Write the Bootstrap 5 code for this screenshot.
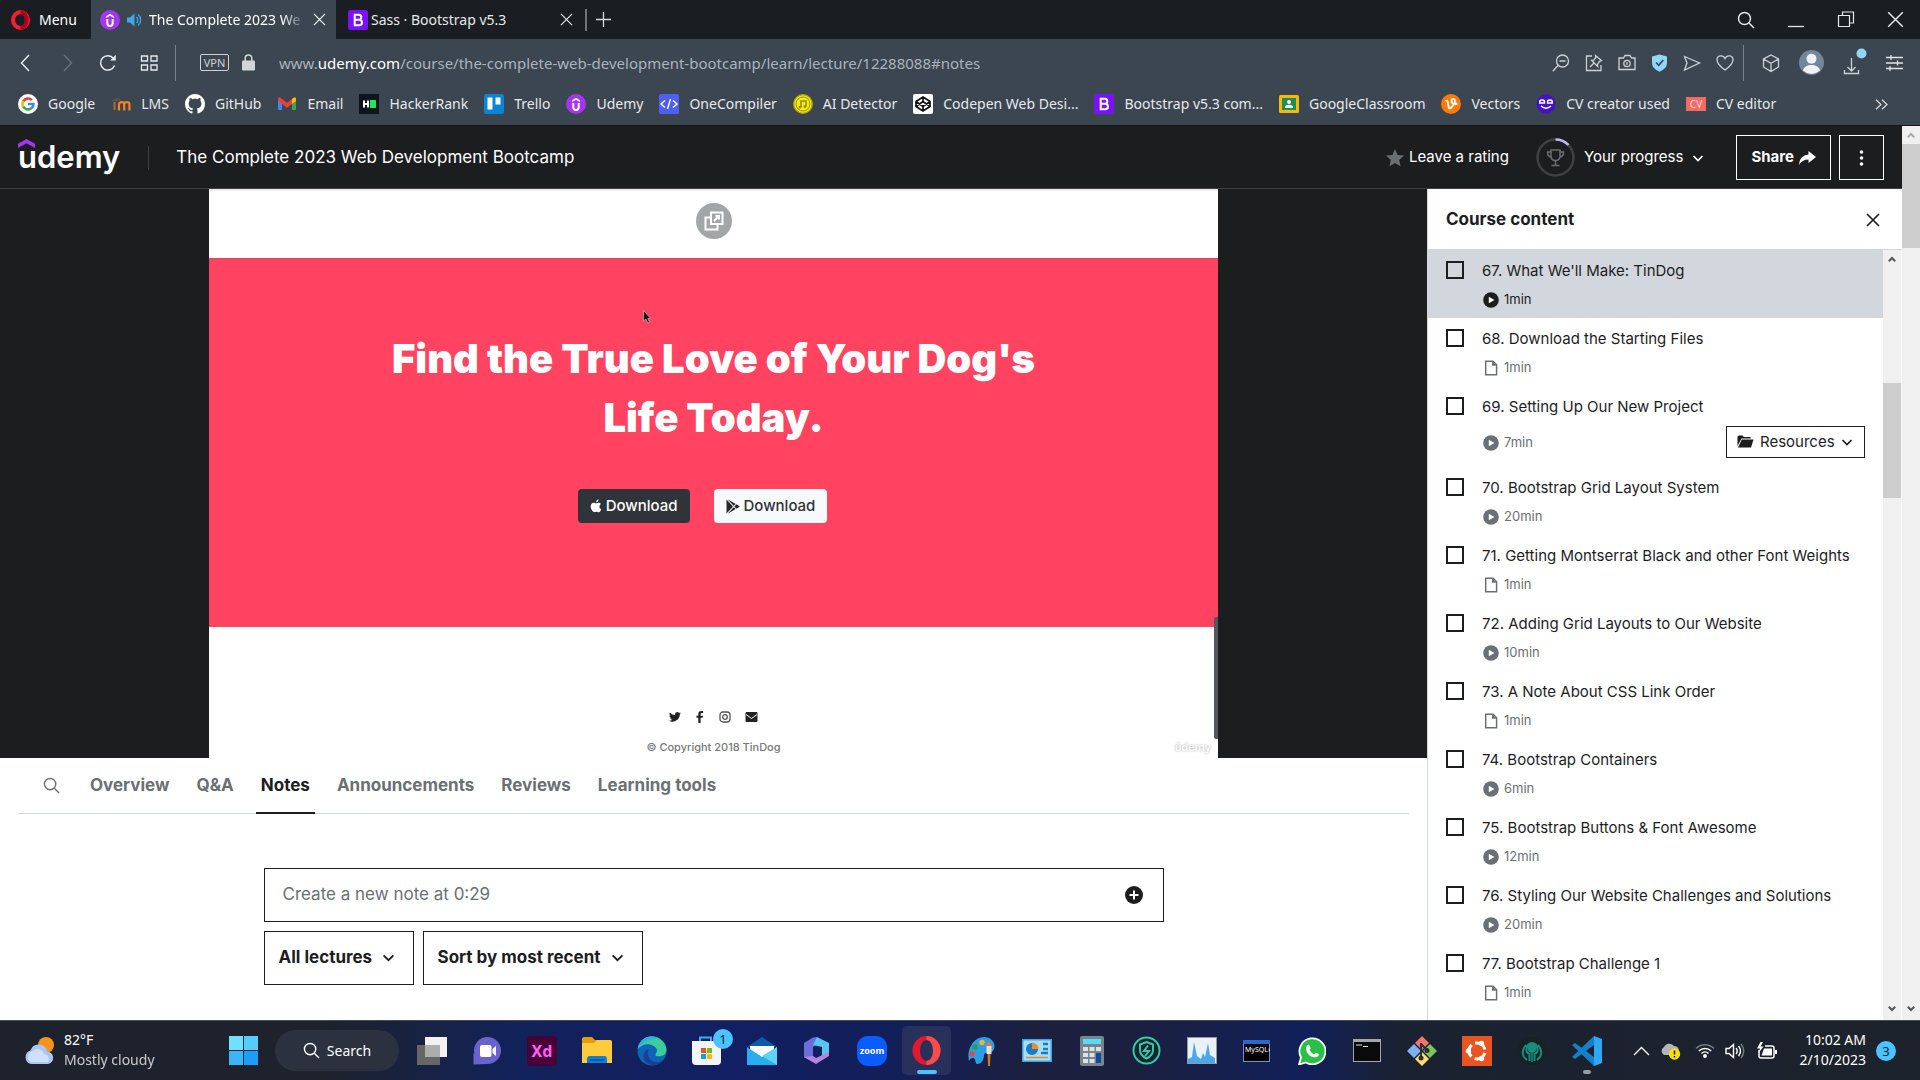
<!DOCTYPE html>
<html lang="en">
<head>
<meta charset="utf-8">
<meta name="viewport" content="width=device-width, initial-scale=1">
<title>The Complete 2023 Web Development Bootcamp</title>
<link href="https://cdn.jsdelivr.net/npm/bootstrap@5.3.0/dist/css/bootstrap.min.css" rel="stylesheet">
<style>
  :root { --ink: #1c1d1f; --chrome: #3b4651; --line: #d1d7dc; --muted: #6a6f73; }
  body { font-family: Inter, "Liberation Sans", sans-serif; color: var(--ink); }
  svg { display: block; flex: none; }
  button, input, select { font-family: inherit; }
  .plain { background: none; border: 0; padding: 0; color: inherit; }
  .ui { font-family: "Noto Sans", "Liberation Sans", sans-serif; font-size: 14px; line-height: 20px; color: #e6e9ec; }

  /* browser window */
  .tabstrip { height: 39px; background: #1a1e22; }
  .wintab { padding: 0 10px 0 9px; width: 245px; gap: 7px; }
  .wintab.current { background: var(--chrome); }
  .wintab.other { padding: 0 8px 0 12px; gap: 3px; }
  .wintab .caption { -webkit-mask-image: linear-gradient(90deg, #000 85%, transparent); }
  .menu-btn { width: 91px; padding-left: 11px; gap: 9px; }
  .window-btns { gap: 32px; padding-right: 16px; }
  .toolbar { height: 49px; background: var(--chrome); padding: 0 17px 2px 16px; }
  .toolbar .nav-btns { gap: 21px; }
  .toolbar .act-btns { gap: 13px; }
  .toolbar .side-btns { gap: 19px; }
  .rule { width: 1px; height: 36px; background: #77828c; }
  .toolbar .rule + .side-btns { margin-left: 18px; }
  .vpn { width: 29px; height: 17px; border: 1px solid #cdd2d6; border-radius: 2px; font-size: 11px; line-height: 15px; color: #cdd2d6; margin-right: 13px; }
  .address { font-size: 15px; color: #aab3bb; white-space: nowrap; }
  .address b { color: #fff; font-weight: 400; }
  .bookmarks { height: 38px; background: var(--chrome); border-bottom: 1px solid #14181b; padding: 0 16px 5px 18px; }
  .bookmarks a { color: inherit; text-decoration: none; gap: 10px; }
  .marks { gap: 16px; }

  /* course header */
  .course-bar { height: 63px; background: var(--ink); border-bottom: 1px solid #3e4143; color: #fff; padding: 1px 18px 0; font-size: 15px; font-weight: 500; }
  .brand { position: relative; font-size: 31px; line-height: 36px; font-weight: 600; color: #fff; text-decoration: none; padding-bottom: 1px; }
  .brand svg { position: absolute; left: 0; top: 0; }
  .course-name { font-size: 17px; font-weight: 400; padding-top: 1px; }
  .bar-rule { width: 1px; height: 24px; background: #3e4143; margin: 0 27px 0 28px; }
  .progress-btn { gap: 9px; margin: 0 24px 0 27px; }
  .box-btn { height: 45px; border: 1px solid #fff; background: none; color: #fff; border-radius: 0; }

  /* lecture */
  .stage { background: var(--ink); }
  .video { width: 70.7%; aspect-ratio: 1009 / 569; position: relative; background: #fff; border-top: 2px solid #ececec; }
  .video-top { height: 67px; }
  .hero { background: #ff4360; color: #fff; padding-top: 70px; border-top: 1px solid #d04a64; }
  .hero h1 { font-size: 40px; line-height: 59px; font-weight: 900; margin: 0 0 42px; }
  .dl { height: 34px; padding: 0 12px; font-size: 15px; font-weight: 500; border-radius: 4px; gap: 4px; border: 0; }
  .dl.btn-dark { background: #2f343a; }
  .dl.btn-light { color: #2f343a; }
  .dl-row { gap: 24px; padding-right: 22px; }
  .video-foot { height: 131px; padding-top: 84px; color: #777; font-size: 11px; font-weight: 500; }
  .social { gap: 14px; }
  .popout { width: 36px; height: 36px; border-radius: 50%; background: #a3a6a7; margin-top: 12px; }
  .pointer { position: absolute; left: 43%; top: 21%; }
  .thumb-v { position: absolute; right: 0; bottom: 19px; width: 4px; height: 122px; background: #55585b; border-radius: 2px 0 0 2px; }
  .mark-u { position: absolute; right: 7px; bottom: 3px; font-size: 11px; line-height: 16px; color: #fff; font-weight: 600; text-shadow: 0 0 2px #999; }

  .sections { height: 56px; margin: 0 18px; border-bottom: 1px solid var(--line); font-size: 17px; font-weight: 700; gap: 17px; }
  .sections a { color: var(--muted); text-decoration: none; padding: 0 5px; }
  .sections a.on { color: var(--ink); border-bottom: 2px solid var(--ink); margin-bottom: -1px; padding-top: 2px; }
  .sections button { width: 67px; margin-right: -17px; }
  .notes { max-width: 900px; padding-top: 54px; gap: 9px; font-size: 17px; }
  .picks { gap: 9px; }
  .note-box { height: 54px; border: 1px solid var(--ink); padding: 0 20px 0 16px; }
  .note-box input { border: 0; outline: 0; background: none; }
  .note-box input::placeholder { color: var(--muted); opacity: 1; }
  .notes select { --bs-form-select-bg-img: url("data:image/svg+xml,%3csvg xmlns='http://www.w3.org/2000/svg' viewBox='0 0 12 12'%3e%3cpath fill='none' stroke='%231c1d1f' stroke-width='1.7' d='m1.5 4 4.5 4.500 4.500-4.500'/%3e%3c/svg%3e");
    height: 54px; width: auto; border: 1px solid var(--ink); border-radius: 0; padding: 0 40px 0 14px; font-size: 17px; font-weight: 700; color: var(--ink); background-position: right 18px center; background-size: 13px; }

  /* lecture list */
  .outline { width: 475px; border-left: 1px solid var(--line); }
  .outline-head { height: 61px; border-bottom: 1px solid var(--line); padding: 1px 20px 0 18px; }
  .outline-head h2 { font-size: 17px; font-weight: 700; }
  .lesson { padding: 10px 18px 8px 18px; gap: 18px; font-size: 15px; line-height: 22px; }
  .lesson.now { background: var(--line); }
  .lesson input { appearance: none; width: 18px; height: 18px; border: 2px solid var(--ink); margin: 1px 0 0; flex: none; }
  .meta { font-size: 13px; color: var(--muted); gap: 5px; margin-top: 6px; }
  .now .meta { color: var(--ink); }
  .meta svg { margin: 2px 0 0 1px; }
  .res-btn { height: 32px; width: 139px; margin: 2px 0 1px; border: 1px solid var(--ink); background: #fff; font-size: 15px; color: var(--ink); gap: 6px; padding: 0 0 0 10px; }
  .track { width: 18px; background: #f0f0f0; color: #555; }
  .track.inner { width: 19px; border-right: 1px solid #fafafa; }
  .track svg { margin: 0 auto; }
  .thumb { background: #cdcdcd; }
  .page-thumb { height: 104px; }
  .list-thumb { height: 115px; }
  .list-lead { height: 133px; padding-top: 6px; }
  .page-lead { height: 18px; padding-top: 6px; color: #aaa; }

  /* desktop bar */
  .desk { height: 60px; border-top: 1px solid #424a56; color: #fff;
    background: linear-gradient(90deg, #1d222c 0, #1d222c 17%, #12225a 27%, #121f62 38%, #131f58 47%, #1c203e 54%, #1b203f 59%, #11205a 68%, #1a2130 73%, #1d232c 100%); }
  .weather { width: 216px; padding: 0 0 2px 24px; gap: 9px; }
  .cell { width: 55px; height: 60px; display: flex; align-items: center; justify-content: center; position: relative; }
  .find { width: 124px; height: 41px; border-radius: 21px; background: #2b313f; margin: 0 5px 0 4px; gap: 7px; border: 0; color: #fff; }
  .active-app { width: 49px; height: 49px; border-radius: 5px; background: #28305c; display: flex; align-items: center; justify-content: center; }
  .dash { position: absolute; bottom: 7px; width: 20px; height: 4px; border-radius: 2px; background: #4cc2ff; }
  .dash.dim { width: 8px; background: #9a9da3; }
  .count { width: 20px; height: 20px; border-radius: 50%; background: #4cc2ff; color: #102030; font-size: 13px; }
  .count.over { position: absolute; right: 1px; top: 8px; }
  .tray { gap: 10px; padding-right: 24px; }
  .clock { text-align: right; margin-left: 12px; padding-bottom: 2px; }
</style>
<script src="https://cdn.jsdelivr.net/npm/bootstrap@5.3.0/dist/js/bootstrap.bundle.min.js"></script>
</head>
<body class="d-flex flex-column vh-100 overflow-hidden">

<svg width="0" height="0" class="position-absolute" aria-hidden="true">
  <symbol id="i-play" viewBox="0 0 16 16"><circle cx="8" cy="8" r="7.800" fill="currentColor"/><path d="M5.800 4.800v6.400L11.400 8z" fill="#fff"/></symbol>
  <symbol id="i-file" viewBox="0 0 16 16"><path d="M2.700 1.200h7.300l3.600 3.600v10H2.700z" fill="none" stroke="currentColor" stroke-width="1.500"/><path d="M9 1v4.800h4.600z" fill="currentColor"/></symbol>
  <symbol id="i-down" viewBox="0 0 12 12"><path d="m1.500 4 4.500 4.500L10.500 4" fill="none" stroke="currentColor" stroke-width="1.700"/></symbol>
  <symbol id="i-sdown" viewBox="0 0 8 6"><path d="M.8.8 4 4l3.200-3.200" fill="none" stroke="currentColor" stroke-width="2"/></symbol>
  <symbol id="i-sup" viewBox="0 0 8 6"><path d="M.8 5.200 4 2l3.200 3.200" fill="none" stroke="currentColor" stroke-width="2"/></symbol>
  <symbol id="i-x" viewBox="0 0 14 14"><path d="m1 1 12 12M13 1 1 13" fill="none" stroke="currentColor" stroke-width="1.200"/></symbol>
  <symbol id="i-udemy" viewBox="0 0 20 20"><circle cx="10" cy="10" r="10" fill="#a435f0"/><path d="m6.200 6.200 3.800-2.400 3.800 2.400v1.900L10 5.800 6.200 8.100z" fill="#fff"/><path d="M7.300 8.900v4.300a2.700 2.700 0 0 0 5.400 0V8.900" fill="none" stroke="#fff" stroke-width="2"/></symbol>
  <symbol id="i-boot" viewBox="0 0 20 20"><rect width="20" height="20" rx="2.500" fill="#7a12f5"/><path d="M6.700 4.700h4.100a2.500 2.500 0 0 1 0 5H6.700zm0 5h4.500a2.800 2.800 0 0 1 0 5.600H6.700z" fill="none" stroke="#fff" stroke-width="2"/></symbol>
  <symbol id="i-lens" viewBox="0 0 18 18"><circle cx="7.500" cy="7.500" r="6" fill="none" stroke="currentColor" stroke-width="1.500"/><path d="m12 12 5 5" stroke="currentColor" stroke-width="1.500"/></symbol>
</svg>

<!-- browser window -->
<header class="ui">
  <div class="tabstrip d-flex align-items-stretch">
    <button class="plain menu-btn d-flex align-items-center text-white" type="button">
      <svg width="19" height="20" viewBox="0 0 19 20"><ellipse cx="9.500" cy="10" rx="7.500" ry="8" fill="none" stroke="#fa1e32" stroke-width="4"/><path d="M9.500 2c8 0 8 16 0 16" fill="none" stroke="#b3001b" stroke-width="4"/></svg>Menu</button>
    <div class="wintab current d-flex align-items-center text-white">
      <svg width="20" height="20"><use href="#i-udemy"/></svg>
      <svg width="15" height="14" viewBox="0 0 15 14"><path d="M0 4.500h3L7.500.5v13L3 9.500H0z" fill="#3fa9e8"/><path d="M9.500 4a4 4 0 0 1 0 6M11 1.500a7 7 0 0 1 0 11" fill="none" stroke="#3fa9e8" stroke-width="1.300"/></svg>
      <span class="caption flex-fill overflow-hidden text-nowrap">The Complete 2023 We</span>
      <button class="plain" type="button" aria-label="Close tab"><svg width="13" height="13"><use href="#i-x"/></svg></button>
    </div>
    <div class="wintab other d-flex align-items-center">
      <svg width="20" height="20"><use href="#i-boot"/></svg>
      <span class="flex-fill text-nowrap">Sass · Bootstrap v5.3</span>
      <button class="plain" type="button" aria-label="Close tab"><svg width="13" height="13"><use href="#i-x"/></svg></button>
    </div>
    <div class="d-flex align-items-center ps-1 gap-2">
      <svg width="2" height="22" viewBox="0 0 2 22"><path d="M1 0v22" stroke="#c5c9cc"/></svg>
      <button class="plain" type="button" aria-label="New tab"><svg width="17" height="17" viewBox="0 0 17 17"><path d="M8.500 1v15M1 8.500h15" stroke="#d5d8da" stroke-width="1.300"/></svg></button>
    </div>
    <div class="window-btns d-flex align-items-center ms-auto">
      <button class="plain" type="button" aria-label="Search tabs"><svg width="18" height="18" viewBox="0 0 18 18"><use href="#i-lens"/></svg></button>
      <button class="plain" type="button" aria-label="Minimise"><svg width="18" height="16" viewBox="0 0 18 16"><path d="M1 14.500h16" stroke="#e6e9ec" stroke-width="1.300"/></svg></button>
      <button class="plain" type="button" aria-label="Restore"><svg width="18" height="17" viewBox="0 0 18 17"><path d="M1.500 4.500h11v11h-11zM5.500 4V1h11v11H13" fill="none" stroke="#e6e9ec" stroke-width="1.200"/></svg></button>
      <button class="plain" type="button" aria-label="Close"><svg width="17" height="17"><use href="#i-x"/></svg></button>
    </div>
  </div>

  <div class="toolbar d-flex align-items-center">
    <div class="nav-btns d-flex align-items-center">
      <button class="plain" type="button" aria-label="Back"><svg width="20" height="18" viewBox="0 0 20 18"><path d="M13 1 5.500 9l7.500 8" fill="none" stroke="currentColor" stroke-width="1.500"/></svg></button>
      <button class="plain opacity-25" type="button" aria-label="Forward"><svg width="20" height="18" viewBox="0 0 20 18"><path d="m7 1 7.500 8L7 17" fill="none" stroke="currentColor" stroke-width="1.500"/></svg></button>
      <button class="plain" type="button" aria-label="Reload"><svg width="20" height="18" viewBox="0 0 20 18"><path d="M16.500 11.500a7.200 7.200 0 1 1-1-7" fill="none" stroke="currentColor" stroke-width="1.500"/><path d="M17.800.8v5.700h-5.700z" fill="currentColor"/></svg></button>
      <button class="plain" type="button" aria-label="Speed dial"><svg width="20" height="18" viewBox="0 0 20 18"><path d="M2.500 2h6v5h-6zM12 2h6v5h-6zM2.500 11h6v5h-6zM12 11h6v5h-6z" fill="none" stroke="currentColor" stroke-width="1.300"/></svg></button>
    </div>
    <div class="rule ms-3"></div>
    <div class="vpn text-center ms-4">VPN</div>
    <svg width="13" height="17" viewBox="0 0 13 17"><path d="M3.200 8V4.200a3.300 3.300 0 0 1 6.600 0V8" fill="none" stroke="#d2d6da" stroke-width="1.500"/><rect y="6.500" width="13" height="10" rx="1.200" fill="#d2d6da"/></svg>
    <div class="address ms-4 flex-fill">www.<b>udemy.com</b>/course/the-complete-web-development-bootcamp/learn/lecture/12288088#notes</div>
    <div class="act-btns d-flex align-items-center">
      <svg width="20" height="20" viewBox="0 0 20 20" fill="none" stroke="#cdd2d6" stroke-width="1.300"><circle cx="11.500" cy="8" r="6"/><path d="m7.300 12.300-5.500 6M8.500 8h6"/></svg>
      <svg width="20" height="20" viewBox="0 0 20 20" fill="none" stroke="#cdd2d6" stroke-width="1.300"><path d="M8 3H2.500v14.500H17V12M6 14l4-4M11.500 2.500l6 5-2 .8-2 3 .2 2.200L7.500 7.300l2.300-.2 2-2.600z"/></svg>
      <svg width="20" height="20" viewBox="0 0 20 20" fill="none" stroke="#cdd2d6" stroke-width="1.300"><path d="M2 5h4.500l1.500-2.500h5L14.500 5H18v11.500H2z"/><circle cx="10" cy="10.500" r="3.200"/><path d="M10 9v3"/></svg>
      <svg width="19" height="20" viewBox="0 0 19 20"><path d="m9.500 1.500 7.500 2V10q0 5.500-7.500 8.700Q2 15.500 2 10V3.500z" fill="#8fd8fb"/><path d="m6 9.500 2.700 2.800L13.300 7" fill="none" stroke="#3b4651" stroke-width="1.700"/></svg>
      <svg width="20" height="20" viewBox="0 0 20 20" fill="none" stroke="#cdd2d6" stroke-width="1.300"><path d="m2.500 3.500 15 6.500-15 7L5 10z"/></svg>
      <svg width="20" height="20" viewBox="0 0 20 20" fill="none" stroke="#cdd2d6" stroke-width="1.300"><path d="M10 17C5 13.500 2 10.500 2 6.800 2 2 8 1.500 10 5.500 12 1.500 18 2 18 6.800c0 3.700-3 6.700-8 10.200z"/></svg>
    </div>
    <div class="rule ms-2"></div>
    <div class="side-btns d-flex align-items-center">
      <svg width="18" height="20" viewBox="0 0 18 20" fill="none" stroke="#cdd2d6" stroke-width="1.300"><path d="m9 2 7.500 4v8L9 18.500 1.500 14V6zM1.500 6 9 10.200 16.500 6M9 10.200v8"/></svg>
      <svg width="25" height="25" viewBox="0 0 25 25"><circle cx="12.500" cy="12.500" r="12.500" fill="#76869a"/><circle cx="12.500" cy="8.700" r="5" fill="#eef2f6"/><path d="M4 20.500C5 13 20 13 21 20.500q-8.500 7-17 0" fill="#eef2f6"/></svg>
      <svg width="24" height="30" viewBox="0 0 24 30"><path d="M8.500 10v13m-4-4 4 4 4-4M1.500 22v3.500h14V22" fill="none" stroke="#cdd2d6" stroke-width="1.300"/><circle cx="18.500" cy="5.500" r="5" fill="#8fd8fb"/></svg>
      <svg width="17" height="18" viewBox="0 0 17 18" stroke="#dfe3e6" stroke-width="1.300"><path d="M0 3.500h17M0 9h17M0 14.500h17M5 1v5M11.500 6.500v5M4 12v5"/></svg>
    </div>
  </div>

  <nav class="bookmarks d-flex align-items-center" aria-label="Bookmarks">
    <div class="marks d-flex align-items-center text-nowrap">
      <a class="d-flex align-items-center" href="#"><svg width="20" height="20" viewBox="0 0 20 20"><circle cx="10" cy="10" r="10" fill="#fff"/><g fill="none" stroke-width="2.600"><path d="M13.900 6.200A5.500 5.500 0 0 0 5.200 7.300" stroke="#ea4335"/><path d="M5.200 7.300a5.500 5.500 0 0 0 0 5.400" stroke="#fbbc05"/><path d="M5.200 12.700a5.500 5.500 0 0 0 8.400 1.400" stroke="#34a853"/><path d="M13.600 14.100A5.500 5.500 0 0 0 15.400 10H10" stroke="#4285f4"/></g></svg>Google</a>
      <a class="d-flex align-items-center" href="#"><svg width="20" height="20" viewBox="0 0 20 20"><path d="m0 6.500 6-2.500 4 1.500-6 2z" fill="#555"/><path d="M3.500 8v8" stroke="#a5673a" stroke-width="2.200"/><path d="M8 16.500v-6q0-2.300 2.600-2.300t2.600 2.300v6m0-6q0-2.300 2.600-2.300t2.600 2.300v6" fill="none" stroke="#f58220" stroke-width="2.200"/></svg>LMS</a>
      <a class="d-flex align-items-center" href="#"><svg width="20" height="20" viewBox="0 0 16 16"><path fill="#fff" d="M8 0C3.580 0 0 3.580 0 8c0 3.540 2.290 6.530 5.470 7.590.4.070.55-.17.55-.38 0-.19-.01-.82-.01-1.490-2.010.37-2.530-.49-2.690-.94-.09-.23-.48-.94-.82-1.130-.28-.15-.68-.52-.01-.53.63-.01 1.080.58 1.230.82.72 1.210 1.870.87 2.330.66.07-.52.28-.87.51-1.070-1.780-.2-3.640-.89-3.640-3.950 0-.87.31-1.590.82-2.150-.08-.2-.36-1.020.08-2.120 0 0 .67-.21 2.200.82.64-.18 1.320-.27 2-.27s1.360.09 2 .27c1.530-1.040 2.200-.82 2.200-.82.44 1.100.16 1.920.08 2.120.51.56.82 1.270.82 2.150 0 3.070-1.870 3.750-3.650 3.950.29.25.54.73.54 1.480 0 1.070-.01 1.930-.01 2.200 0 .21.15.46.55.38A8 8 0 0 0 16 8c0-4.420-3.580-8-8-8"/></svg>GitHub</a>
      <a class="d-flex align-items-center" href="#"><svg width="20" height="20" viewBox="0 0 20 20"><path d="M1 4.500V16h4V9z" fill="#4285f4"/><path d="M19 4.500V16h-4V9z" fill="#34a853"/><path d="M15 5v5l4-3V4.500Q18 2 15 5" fill="#fbbc04"/><path d="M1 4.500V7l9 6.700L15 10V5l-5 3.800L5 5Q2 2 1 4.500" fill="#ea4335"/></svg>Email</a>
      <a class="d-flex align-items-center" href="#"><svg width="20" height="20" viewBox="0 0 20 20"><rect width="20" height="20" fill="#0e141e"/><path d="M5 6.500v7M9 6.500v7M5 10h4" stroke="#fff" stroke-width="2"/><path d="M11 6h6v8h-6z" fill="#1ee65f"/></svg>HackerRank</a>
      <a class="d-flex align-items-center" href="#"><svg width="20" height="20" viewBox="0 0 20 20"><rect width="20" height="20" rx="2.500" fill="#0a84d6"/><path d="M3.500 3.500h5v12h-5zM11.500 3.500h5v7h-5z" fill="#fff"/></svg>Trello</a>
      <a class="d-flex align-items-center" href="#"><svg width="20" height="20"><use href="#i-udemy"/></svg>Udemy</a>
      <a class="d-flex align-items-center" href="#"><svg width="20" height="20" viewBox="0 0 20 20"><rect width="20" height="20" rx="1.500" fill="#4f5ff0"/><path d="M6 6.500 2 10l4 3.500M14 6.500l4 3.500-4 3.500M11.500 5l-3 10" fill="none" stroke="#fff" stroke-width="1.400"/></svg>OneCompiler</a>
      <a class="d-flex align-items-center" href="#"><svg width="20" height="20" viewBox="0 0 20 20"><circle cx="10" cy="10" r="9.300" fill="#f5ea1b" stroke="#b0a600" stroke-width="1.300"/><circle cx="10" cy="10" r="7" fill="none" stroke="#968d00"/><path d="M8 13V7h5v5" fill="none" stroke="#968d00" stroke-width="1.500"/><circle cx="7" cy="13" r="1.500" fill="#968d00"/><circle cx="12" cy="12.500" r="1.500" fill="#968d00"/></svg>AI Detector</a>
      <a class="d-flex align-items-center" href="#"><svg width="20" height="20" viewBox="0 0 20 20"><rect width="20" height="20" rx="2" fill="#fff"/><path d="m10 3 7 4.500v5L10 17l-7-4.500v-5zM10 3v4.500M10 12.500V17M3 7.500l7 5 7-5M3 12.500l7-5 7 5" fill="none" stroke="#111" stroke-width="1.700"/></svg>Codepen Web Desi...</a>
      <a class="d-flex align-items-center" href="#"><svg width="20" height="20"><use href="#i-boot"/></svg>Bootstrap v5.3 com...</a>
      <a class="d-flex align-items-center" href="#"><svg width="20" height="20" viewBox="0 0 20 20"><rect y="1" width="20" height="18" rx="1.500" fill="#f6b90c"/><path d="M3 4h14v12H3z" fill="#1e8e53"/><circle cx="10" cy="8" r="1.900" fill="#fff"/><path d="M6 14q0-3.200 4-3.200t4 3.200z" fill="#fff"/></svg>GoogleClassroom</a>
      <a class="d-flex align-items-center" href="#"><svg width="20" height="20" viewBox="0 0 20 20"><circle cx="10" cy="10" r="10" fill="#ff7a00"/><path d="M4.500 7q2-1 2.300 1.500l1 5q.5 2 3-.5c3-3 4-7 2-8s-3.500 3-1 4.500q2 1 4.500 0" fill="none" stroke="#fff" stroke-width="1.900"/></svg>Vectors</a>
      <a class="d-flex align-items-center" href="#"><svg width="20" height="20" viewBox="0 0 20 20"><circle cx="10" cy="10" r="9.700" fill="#4414c4"/><path d="M3.800 9V7.500q0-1.500 2.300-1.500t2.300 1.500V9zM11.600 9V7.500q0-1.500 2.300-1.500t2.300 1.500V9zM5 12q5 4.500 10 0" fill="none" stroke="#fff" stroke-width="1.500"/></svg>CV creator used</a>
      <a class="d-flex align-items-center" href="#"><svg width="20" height="20" viewBox="0 0 20 20"><rect y="3" width="20" height="14" fill="#f56a62"/><text x="10" y="14" font-size="10" text-anchor="middle" fill="#ffd5d0">CV</text></svg>CV editor</a>
    </div>
    <button class="plain ms-auto me-3" type="button" aria-label="More bookmarks"><svg width="13" height="11" viewBox="0 0 13 11"><path d="m1 .7 5 4.800-5 4.800M7 .7l5 4.800-5 4.800" fill="none" stroke="#d5d9dc" stroke-width="1.300"/></svg></button>
  </nav>
</header>

<!-- web page -->
<div class="d-flex flex-fill overflow-hidden">
  <div class="d-flex flex-column flex-fill overflow-hidden">
    <header class="course-bar d-flex align-items-center flex-shrink-0">
      <a class="brand" href="#"><svg width="17" height="9" viewBox="0 0 17 9"><path d="m0 4.800 8.500-4.800L17 4.800V9L8.500 4.300 0 9z" fill="#a435f0"/></svg>udemy</a>
      <div class="bar-rule"></div>
      <span class="course-name">The Complete 2023 Web Development Bootcamp</span>
      <button class="plain d-flex align-items-center ms-auto" type="button"><svg class="me-1" width="20" height="20" viewBox="0 0 20 20"><path d="m10 1 2.600 6 6.400.6-4.800 4.300 1.400 6.400L10 15l-5.600 3.300 1.400-6.400L1 7.600 7.400 7z" fill="#6a6f73"/></svg>Leave a rating</button>
      <button class="plain progress-btn d-flex align-items-center" type="button">
        <svg width="39" height="39" viewBox="0 0 39 39"><circle cx="19.500" cy="19.500" r="18" fill="none" stroke="#3e4143" stroke-width="2.500"/><path d="M19.500 1.500A18 18 0 0 1 32.500 7" fill="none" stroke="#c0b4f5" stroke-width="2.500"/><path d="M15 12h9v6q0 4.500-4.500 4.500T15 18zM15 14h-3.500q0 5 4 5M24 14h3.500q0 5-4 5M19.500 22.500V27M15.500 27.500h8" fill="none" stroke="#6a6f73" stroke-width="1.500"/></svg>
        <span>Your progress</span><svg width="12" height="12"><use href="#i-down"/></svg></button>
      <button class="box-btn d-flex align-items-center justify-content-center fw-bold ms-2" type="button"><span class="ps-2 me-1">Share</span><svg class="me-2" width="18" height="16" viewBox="0 0 18 16"><path d="M10.500 1 18 7l-7.500 6V9.500Q4 9.500 1 15 1.500 5.500 10.500 4.500z" fill="#fff"/></svg></button>
      <button class="box-btn ms-2 px-3" type="button" aria-label="More options"><svg width="11" height="18" viewBox="0 0 11 18" fill="#fff"><circle cx="5.500" cy="3" r="1.800"/><circle cx="5.500" cy="9" r="1.800"/><circle cx="5.500" cy="15" r="1.800"/></svg></button>
    </header>

    <div class="d-flex flex-fill overflow-hidden">
      <main class="flex-fill overflow-hidden">
        <section class="stage d-flex justify-content-center">
          <div class="video d-flex flex-column">
            <div class="video-top text-center"><button class="plain popout d-inline-flex align-items-center justify-content-center" type="button" aria-label="Open in new window"><svg width="20" height="20" viewBox="0 0 20 20" fill="none" stroke="#fff" stroke-width="2"><path d="M7 1.500h11.500v11.500H7z"/><path d="M6 6.500H1.500v12h12V14M10 10l5-5M11.500 5H15v3.500"/></svg></button></div>
            <div class="hero flex-fill text-center">
              <h1>Find the True Love of Your Dog's<br>Life Today.</h1>
              <div class="dl-row d-flex justify-content-center">
                <button class="btn btn-dark dl d-flex align-items-center" type="button"><svg width="12" height="14" viewBox="0 0 12 14" fill="#fff"><path d="M8.500.3Q8.700 2.700 6.100 3.500 6 1 8.500.3M11.300 10.200C10 13.500 8.700 13.600 7.500 13.100q-1.200-.5-2.400 0C3.500 13.800 1 11 .7 8 .4 4.500 3 3 4.800 3.900q1.300.6 2.600 0Q9.800 3.300 11 5.100C8.700 6.600 9 9.200 11.300 10.200"/></svg>Download</button>
                <button class="btn btn-light dl d-flex align-items-center" type="button"><svg width="14" height="15" viewBox="0 0 14 15" fill="#23272b"><path d="M.5.5v14L7 7.500zM1.500.3l6.200 6.400L9.700 4.900zM1.500 14.700l6.200-6.400 2 1.800zM10.500 5.300 8.300 7.500l2.200 2.200L13.800 7.500z"/></svg>Download</button>
              </div>
            </div>
            <div class="video-foot text-center">
              <div class="social d-flex justify-content-center mb-3">
                <svg width="12" height="12" viewBox="0 0 12 12" fill="#222"><path d="M0 9.800q2 0 3.400-1Q1.700 8.600 1.200 7.200h1.100Q.5 6.500.4 4.700l1.100.3Q-.1 3.500.9 1.500 3 4 6 4.100 5.600 1.300 8.300 1.100q1 0 1.800.8l1.500-.6-1 1.400 1.400-.4-1.200 1.300c0 5-5.500 8.900-10.800 6.200"/></svg>
                <svg width="10" height="12" viewBox="0 0 10 12" fill="#222"><path d="M3.300 12V6.700H1.500v-2h1.800V3q0-3 3-3h1.800v2H6.800Q5.600 2 5.600 3.200v1.500H8l-.3 2H5.600V12z"/></svg>
                <svg width="12" height="12" viewBox="0 0 12 12" fill="none" stroke="#555" stroke-width="1.300"><rect x="1" y="1" width="10" height="10" rx="3"/><circle cx="6" cy="6" r="2.300"/></svg>
                <svg width="13" height="12" viewBox="0 0 13 12"><rect x=".5" y="1" width="12" height="10" rx="1.200" fill="#222"/><path d="m1 3.500 5.500 4 5.500-4" fill="none" stroke="#fff"/></svg>
              </div>
              © Copyright 2018 TinDog
            </div>
            <svg class="pointer" width="8" height="14" viewBox="0 0 8 14"><path d="M.5.500v10.500L3 9l1.800 4 1.700-.8L4.800 8.500h3z" fill="#111" stroke="#ccc" stroke-width=".6"/></svg>
            <div class="thumb-v"></div>
            <div class="mark-u">ûdemy</div>
          </div>
        </section>

        <nav class="sections d-flex align-items-stretch" aria-label="Course sections">
          <button class="plain" type="button" aria-label="Search course"><svg class="mx-auto" width="17" height="17" viewBox="0 0 18 18" style="color:#6a6f73"><use href="#i-lens"/></svg></button>
          <a class="d-flex align-items-center" href="#">Overview</a>
          <a class="d-flex align-items-center" href="#">Q&amp;A</a>
          <a class="d-flex align-items-center on" href="#" aria-current="page">Notes</a>
          <a class="d-flex align-items-center" href="#">Announcements</a>
          <a class="d-flex align-items-center" href="#">Reviews</a>
          <a class="d-flex align-items-center" href="#">Learning tools</a>
        </nav>

        <section class="notes d-flex flex-column mx-auto">
          <div class="note-box d-flex align-items-center">
            <input class="flex-fill" type="text" aria-label="New note" placeholder="Create a new note at 0:29">
            <button class="plain" type="button" aria-label="Add note"><svg width="18" height="18" viewBox="0 0 18 18"><circle cx="9" cy="9" r="9" fill="#1c1d1f"/><path d="M9 4.500v9M4.500 9h9" stroke="#fff" stroke-width="2"/></svg></button>
          </div>
          <div class="picks d-flex">
            <select class="form-select" aria-label="Lectures shown"><option>All lectures</option></select>
            <select class="form-select" aria-label="Sort order"><option>Sort by most recent</option></select>
          </div>
        </section>
      </main>

      <aside class="outline d-flex flex-column flex-shrink-0">
        <div class="outline-head d-flex align-items-center justify-content-between">
          <h2 class="m-0">Course content</h2>
          <button class="plain" type="button" aria-label="Close course content"><svg width="18" height="14" viewBox="0 0 14 14"><path d="m1 1 12 12M13 1 1 13" fill="none" stroke="currentColor" stroke-width="1.700"/></svg></button>
        </div>
        <div class="d-flex flex-fill overflow-hidden">
          <div class="flex-fill overflow-hidden">
            <div class="lesson now d-flex"><input type="checkbox" id="l67"><div class="flex-fill"><label for="l67">67. What We'll Make: TinDog</label><div class="meta d-flex align-items-center"><svg width="16" height="16"><use href="#i-play"/></svg>1min</div></div></div>
            <div class="lesson d-flex"><input type="checkbox" id="l68"><div class="flex-fill"><label for="l68">68. Download the Starting Files</label><div class="meta d-flex align-items-center"><svg width="16" height="16"><use href="#i-file"/></svg>1min</div></div></div>
            <div class="lesson d-flex"><input type="checkbox" id="l69"><div class="flex-fill"><label for="l69">69. Setting Up Our New Project</label><div class="meta d-flex align-items-center"><svg width="16" height="16"><use href="#i-play"/></svg>7min
              <button class="res-btn d-flex align-items-center ms-auto" type="button"><svg class="m-0" width="17" height="14" viewBox="0 0 17 14"><path d="M.5 11V2q0-1.500 1.500-1.500h3.500l1.500 1.500h5.500Q14 2 14 3.500H4.500z" fill="currentColor"/><path d="M4.800 4.500H16.500L14 12.500H1z" fill="currentColor"/></svg>Resources<svg class="m-0" width="12" height="12"><use href="#i-down"/></svg></button></div></div></div>
            <div class="lesson d-flex"><input type="checkbox" id="l70"><div class="flex-fill"><label for="l70">70. Bootstrap Grid Layout System</label><div class="meta d-flex align-items-center"><svg width="16" height="16"><use href="#i-play"/></svg>20min</div></div></div>
            <div class="lesson d-flex"><input type="checkbox" id="l71"><div class="flex-fill"><label for="l71">71. Getting Montserrat Black and other Font Weights</label><div class="meta d-flex align-items-center"><svg width="16" height="16"><use href="#i-file"/></svg>1min</div></div></div>
            <div class="lesson d-flex"><input type="checkbox" id="l72"><div class="flex-fill"><label for="l72">72. Adding Grid Layouts to Our Website</label><div class="meta d-flex align-items-center"><svg width="16" height="16"><use href="#i-play"/></svg>10min</div></div></div>
            <div class="lesson d-flex"><input type="checkbox" id="l73"><div class="flex-fill"><label for="l73">73. A Note About CSS Link Order</label><div class="meta d-flex align-items-center"><svg width="16" height="16"><use href="#i-file"/></svg>1min</div></div></div>
            <div class="lesson d-flex"><input type="checkbox" id="l74"><div class="flex-fill"><label for="l74">74. Bootstrap Containers</label><div class="meta d-flex align-items-center"><svg width="16" height="16"><use href="#i-play"/></svg>6min</div></div></div>
            <div class="lesson d-flex"><input type="checkbox" id="l75"><div class="flex-fill"><label for="l75">75. Bootstrap Buttons &amp; Font Awesome</label><div class="meta d-flex align-items-center"><svg width="16" height="16"><use href="#i-play"/></svg>12min</div></div></div>
            <div class="lesson d-flex"><input type="checkbox" id="l76"><div class="flex-fill"><label for="l76">76. Styling Our Website Challenges and Solutions</label><div class="meta d-flex align-items-center"><svg width="16" height="16"><use href="#i-play"/></svg>20min</div></div></div>
            <div class="lesson d-flex"><input type="checkbox" id="l77"><div class="flex-fill"><label for="l77">77. Bootstrap Challenge 1</label><div class="meta d-flex align-items-center"><svg width="16" height="16"><use href="#i-file"/></svg>1min</div></div></div>
          </div>
          <div class="track inner d-flex flex-column">
            <div class="list-lead"><svg width="8" height="6"><use href="#i-sup"/></svg></div>
            <div class="thumb list-thumb"></div>
            <svg class="mt-auto mb-2" width="8" height="6"><use href="#i-sdown"/></svg>
          </div>
        </div>
      </aside>
    </div>
  </div>
  <div class="track d-flex flex-column flex-shrink-0">
    <div class="page-lead"><svg width="8" height="6"><use href="#i-sup"/></svg></div>
    <div class="thumb page-thumb"></div>
    <svg class="mt-auto mb-2" width="8" height="6"><use href="#i-sdown"/></svg>
  </div>
</div>

<!-- desktop bar -->
<footer class="desk ui d-flex align-items-center flex-shrink-0">
  <div class="weather d-flex align-items-center">
    <svg width="31" height="28" viewBox="0 0 31 28"><circle cx="22" cy="9" r="8" fill="#f6931d"/><path d="M7 28a7 7 0 0 1-.5-13.500A8.500 8.500 0 0 1 23 15.500 6.300 6.300 0 0 1 24 28z" fill="#a9c6f5"/><path d="M7 26a6 6 0 0 1 2-11 6.500 6.500 0 0 1 11 3 5 5 0 0 1 4 8z" fill="#cfe0fb"/></svg>
    <div>82°F<br><span class="opacity-75">Mostly cloudy</span></div>
  </div>
  <div class="cell"><svg width="29" height="29" viewBox="0 0 29 29"><path d="M0 0h14v14H0z" fill="#6fe0fd"/><path d="M15 0h14v14H15z" fill="#56cdfc"/><path d="M0 15h14v14H0z" fill="#3bb5f8"/><path d="M15 15h14v14H15z" fill="#1a9ff8"/></svg></div>
  <button class="find d-flex align-items-center justify-content-center" type="button"><svg width="17" height="17"><use href="#i-lens"/></svg>Search</button>
  <div class="cell"><svg width="30" height="28" viewBox="0 0 30 28"><path d="M0 8h23v20H0z" fill="#666"/><path d="M8 0h22v20H8z" fill="#f2f2f2"/><path d="M8 8h15v12H8z" fill="#adadad"/></svg></div>
  <div class="cell"><svg width="30" height="30" viewBox="0 0 30 30"><circle cx="15.500" cy="14.500" r="13.500" fill="#6a63cd"/><path d="M1.500 28.500V17l14 11z" fill="#6a63cd"/><rect x="8" y="9" width="11.500" height="12" rx="2" fill="#fff"/><path d="m20.500 13 3.500-3v10l-3.500-3z" fill="#fff"/></svg></div>
  <div class="cell"><svg width="30" height="30" viewBox="0 0 30 30"><rect width="30" height="30" rx="4" fill="#470137"/><text x="15" y="21" text-anchor="middle" font-size="16" font-weight="700" fill="#ff61f6">Xd</text></svg></div>
  <div class="cell"><svg width="30" height="28" viewBox="0 0 30 28"><path d="M0 2q0-2 2-2h8l3 3h15v8H0z" fill="#e39c0a"/><path d="M0 6h12l3-3h13q2 0 2 2v21H0z" fill="#ffcb3a"/><path d="M5 26v-4q0-3 3-3h14q3 0 3 3v4z" fill="#0f7fd6"/><path d="M8 23h14" stroke="#064f92" stroke-width="1.500"/></svg></div>
  <div class="cell"><svg width="30" height="30" viewBox="0 0 30 30"><circle cx="15" cy="15" r="14.500" fill="#0e65b8"/><path d="M.7 13C3-4 27-3 29.500 13c.5 6-5 8-10 7-3-1 1-3 .5-6C18.500 8 7 5 .7 13" fill="#3ccc9a"/><path d="M.7 13C3 1 15-3 23 3 12 2 5 7 .7 13" fill="#2eb0e2"/><path d="M12 13c-3 5 0 12 7 13 4 .500 7-2 8-3-5 8-17 8-20 0-1.500-5 1-9 5-10" fill="#1b3f92"/></svg></div>
  <div class="cell"><svg width="29" height="29" viewBox="0 0 29 29"><path d="M8 6V1.500h11V6" fill="none" stroke="#36b1ee" stroke-width="2"/><path d="M0 5h29v20q0 4-4 4H4q-4 0-4-4z" fill="#f2f4f7"/><path d="M9 12h5v5H9z" fill="#f25022"/><path d="M15 12h5v5h-5z" fill="#7fba00"/><path d="M9 18h5v5H9z" fill="#00a4ef"/><path d="M15 18h5v5h-5z" fill="#ffb900"/></svg><span class="count over text-center">1</span></div>
  <div class="cell"><svg width="30" height="28" viewBox="0 0 30 28"><path d="M15 0 30 10H0z" fill="#0b5ca8"/><path d="M3 9h24v8L15 22 3 17z" fill="#fff"/><path d="M0 10 15 20 30 10v18H0z" fill="#27aef0"/><path d="m30 28-15-9 15-9z" fill="#5fd2fb"/></svg></div>
  <div class="cell"><svg width="27" height="29" viewBox="0 0 27 29"><path d="M10 1.500 1 7v14l9 5V11l7-4-3-6z" fill="#6a6fd8"/><path d="m14 1 12 6v12l-7 4V11l-9-2z" fill="#56c5f2"/><path d="M1 21l12 7 13-8v-4l-13 6-3-2z" fill="#b683e0"/></svg></div>
  <div class="cell"><svg width="30" height="30" viewBox="0 0 30 30"><rect width="30" height="30" rx="11" fill="#0b5cff"/><text x="15" y="18" text-anchor="middle" font-size="9" font-weight="700" fill="#fff">zoom</text></svg></div>
  <div class="cell"><div class="active-app"><svg width="29" height="29" viewBox="0 0 29 29"><ellipse cx="14.500" cy="14.500" rx="14" ry="14.500" fill="#e0192c"/><path d="M14.500 0a14 14.500 0 0 1 0 29z" fill="#fb4b4b"/><ellipse cx="14.500" cy="14.500" rx="6.500" ry="10.500" fill="#28305c"/></svg></div><span class="dash"></span></div>
  <div class="cell"><svg width="30" height="30" viewBox="0 0 30 30"><path d="M2 25C-1 12 8 0 18 1c8 1 12 8 8 14-3 3-8 0-9 4 0 4-2 9-7 9-2 0-1-6-4-6-2 0-3 1-4 3" fill="#2b9fe6"/><circle cx="8" cy="11" r="2.700" fill="#2c9d45"/><circle cx="15" cy="6.500" r="2.700" fill="#f9b321"/><circle cx="22" cy="9" r="2.500" fill="#e8792b"/><circle cx="5" cy="18" r="2.500" fill="#e04a3a"/><path d="M19.500 10h5v8h-5z" fill="#e8e0d0"/><path d="M20.500 18h3l-.5 12h-2z" fill="#c47a1e"/></svg></div>
  <div class="cell"><svg width="30" height="23" viewBox="0 0 30 23"><rect width="30" height="23" fill="#3ba6e2"/><path d="M1.500 1.500h27v20h-27z" fill="#a8dcf7"/><circle cx="10" cy="10" r="6" fill="#1b7cc5"/><path d="M10 10V3.500a6.500 6.500 0 0 1 6.500 6.500z" fill="#f58b1e"/><path d="M21 5h5M21 10h5M19 14h7" stroke="#1b7cc5" stroke-width="2.500"/><path d="M4 18.500h22" stroke="#f08a1c" stroke-width="1.500"/></svg></div>
  <div class="cell"><svg width="24" height="30" viewBox="0 0 24 30"><rect width="24" height="30" rx="2" fill="#79848d"/><path d="M3 3h18v5H3z" fill="#56dcf6"/><path d="M3 11h5v4H3zm6.500 0h5v4h-5zm6.500 0h5v4h-5zM3 17h5v4H3zm6.500 0h5v4h-5zM3 23h5v4H3zm6.500 0h5v4h-5z" fill="#dde1e4"/><path d="M16 17h5v10h-5z" fill="#0d4b9c"/></svg></div>
  <div class="cell"><svg width="29" height="29" viewBox="0 0 29 29"><circle cx="14.500" cy="14.500" r="13" fill="#182430" stroke="#36c9a5" stroke-width="2"/><path d="M14.500 6 21 8.500V14q0 5.500-6.500 8.500Q8 19.500 8 14V8.500z" fill="none" stroke="#36c9a5" stroke-width="2"/><path d="M16 9.500 12 15h5l-4 5" fill="none" stroke="#36c9a5" stroke-width="2"/></svg></div>
  <div class="cell"><svg width="30" height="27" viewBox="0 0 30 27"><rect width="30" height="27" fill="#8d9aa5"/><path d="M1 1h28v25H1z" fill="#eaf1f7"/><path d="M1 26v-4l4-2 2-15 3 14 4 3 2-6 2 4 3-14 2 12 5 3v5z" fill="#4ba7e8"/></svg></div>
  <div class="cell"><svg width="27" height="22" viewBox="0 0 27 22"><rect width="27" height="22" fill="#6e93c4"/><path d="M0 0h27v4H0z" fill="#2b68ce"/><path d="M1 4h25v17H1z" fill="#000"/><text x="2" y="12" font-size="7" fill="#fff">MySQL›</text></svg></div>
  <div class="cell"><svg width="28" height="28" viewBox="0 0 28 28"><path d="M1 27.500 3 20.500A13 13 0 1 1 7.800 25.500z" fill="#2bbf45" stroke="#fff" stroke-width="1.800"/><path d="M9 8.500c2-2 3 0 3.500 2.500.2 1-1 1.500-1 2q1.500 3 4.500 4.200c.6 0 1.300-1.500 2-1.500 2 .6 3.500 1.300 2.500 3C15 24 5 15 9 8.500" fill="#fff"/></svg></div>
  <div class="cell"><svg width="28" height="23" viewBox="0 0 28 23"><rect width="28" height="23" fill="#a3a7ab"/><path d="M1 3h26v19H1z" fill="#0a0a0a"/><path d="M3 6h6M10 7.500h5" stroke="#ddd" stroke-width="1.200"/></svg></div>
  <div class="cell"><svg width="30" height="30" viewBox="0 0 30 30"><path d="m15 0 7 7-7 7-7-7z" fill="#f5736d"/><path d="m7 8 7 7-7 7-7-7z" fill="#7fb2f5"/><path d="m23 8 7 7-7 7-7-7z" fill="#7cc457"/><path d="m15 16 7 7-7 7-7-7z" fill="#ffdf6b"/><path d="M14 7v16M14 8l6 6" stroke="#2a2f36" stroke-width="2"/><circle cx="14" cy="22" r="2.500" fill="#2a2f36"/><circle cx="20" cy="14.500" r="2.500" fill="#2a2f36"/></svg></div>
  <div class="cell"><svg width="30" height="30" viewBox="0 0 30 30"><rect width="30" height="30" fill="#e95420"/><circle cx="15" cy="15" r="8" fill="none" stroke="#fff" stroke-width="3" stroke-dasharray="13 3.750" stroke-dashoffset="-2"/><circle cx="6.500" cy="15" r="2.700" fill="#fff"/><circle cx="19.500" cy="7.500" r="2.700" fill="#fff"/><circle cx="19.500" cy="22.500" r="2.700" fill="#fff"/></svg></div>
  <div class="cell"><svg width="30" height="30" viewBox="0 0 30 30"><circle cx="15" cy="15" r="14" fill="#182124"/><path d="M12.500 25V18q-3.500-1-3-5Q10 7.500 15 7q5 .5 5.500 6 .500 4-3 5v7M9 9q-7 9 1 15M21 9q7 9-1 15" fill="none" stroke="#148f7c" stroke-width="2"/><ellipse cx="15" cy="12" rx="4.500" ry="5" fill="#148f7c"/><path d="M15 15v11" stroke="#148f7c" stroke-width="1.500"/></svg></div>
  <div class="cell"><svg width="30" height="30" viewBox="0 0 30 30"><path d="M22 0v30L2 11l-2-2 3-2 19 14V9L3 23l-3-2 2-2z" fill="#1480cc"/><path d="m22 0 8 3v24l-8 3z" fill="#2fa8f2"/></svg><span class="dash dim"></span></div>
  <div class="tray d-flex align-items-center ms-auto">
    <svg width="17" height="10" viewBox="0 0 17 10"><path d="m1 9 7.500-7.500L16 9" fill="none" stroke="#fff" stroke-width="1.400"/></svg>
    <svg class="me-1" width="21" height="18" viewBox="0 0 21 18"><path d="M4 13a4.500 4.500 0 0 1 0-8A6 6 0 0 1 14 4a5 5 0 0 1 3 9z" fill="#b2b5b9"/><circle cx="14.500" cy="12" r="5.700" fill="#fce100"/><path d="M14.500 8.500v4M14.500 14v1.500" stroke="#222" stroke-width="1.500"/></svg>
    <svg width="20" height="15" viewBox="0 0 20 15" fill="none" stroke="#fff" stroke-width="1.500"><path d="M1 5.500a12.500 12.500 0 0 1 18 0" opacity=".4"/><path d="M3.800 8a9 9 0 0 1 12.400 0M6.500 10.500a5 5 0 0 1 7 0"/><circle cx="10" cy="13" r="1.200" fill="#fff"/></svg>
    <svg width="21" height="16" viewBox="0 0 21 16" fill="none" stroke="#fff" stroke-width="1.400"><path d="M1 5.500h3L8.500 1.500v13L4 10.500H1zM11 5q2.500 3 0 6M13.500 3q4 5 0 10"/><path d="M16 1q5.500 7 0 14" opacity=".4"/></svg>
    <svg width="22" height="17" viewBox="0 0 22 17"><path d="M3 8v6q0 2 2 2h11q2 0 2-2V6q0-2-2-2H9" fill="none" stroke="#fff" stroke-width="1.500"/><path d="M8 6.500h8v7H5.500zM19 8h2v4h-2zM4.500 0 1 6.500h3L2.500 11l5-6.500h-3L7 0z" fill="#fff"/></svg>
    <div class="clock">10:02 AM<br>2/10/2023</div>
    <span class="count text-center">3</span>
  </div>
</footer>
</body>
</html>
